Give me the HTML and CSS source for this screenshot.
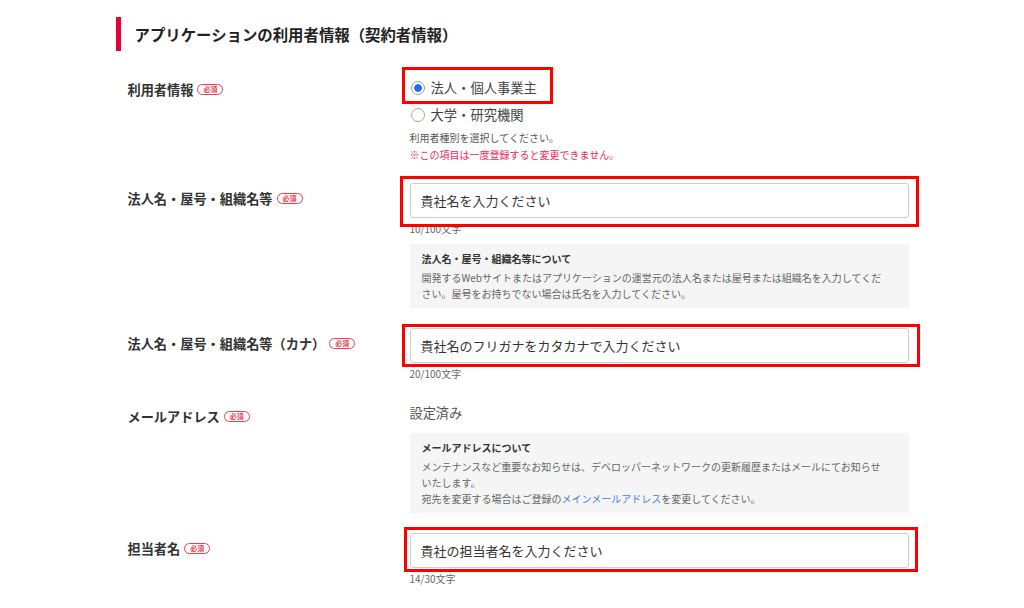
FILE: index.html
```html
<!DOCTYPE html>
<html lang="ja">
  <head>
    <meta charset="utf-8" />
    <title>アプリケーションの利用者情報</title>
    <link rel="stylesheet" href="styles.css">
  </head>
  <body>
    <div class="page">
      <h2 class="heading">アプリケーションの利用者情報（契約者情報）</h2>

      <div class="form">
        <!-- 利用者情報 -->
        <div class="row">
          <div class="label"><span>利用者情報</span><span class="badge">必須</span></div>
          <div class="field">
            <div class="options">
              <label class="option mark mark-radio"><span class="radio checked"></span>法人・個人事業主</label>
              <label class="option"><span class="radio"></span>大学・研究機関</label>
            </div>
            <div class="help">利用者種別を選択してください。</div>
            <div class="note">※この項目は一度登録すると変更できません。</div>
          </div>
        </div>

        <!-- 法人名 -->
        <div class="row">
          <div class="label"><span>法人名・屋号・組織名等</span><span class="badge">必須</span></div>
          <div class="field">
            <div class="mark mark-name"><input class="input" type="text" value="貴社名を入力ください"></div>
            <div class="count">10/100文字</div>
            <div class="info">
              <div class="info-title">法人名・屋号・組織名等について</div>
              <p>開発するWebサイトまたはアプリケーションの運営元の法人名または屋号または組織名を入力してください。屋号をお持ちでない場合は氏名を入力してください。</p>
            </div>
          </div>
        </div>

        <!-- カナ -->
        <div class="row">
          <div class="label"><span>法人名・屋号・組織名等（カナ）</span><span class="badge">必須</span></div>
          <div class="field">
            <div class="mark mark-kana"><input class="input" type="text" value="貴社名のフリガナをカタカナで入力ください"></div>
            <div class="count">20/100文字</div>
          </div>
        </div>

        <!-- メール -->
        <div class="row">
          <div class="label"><span>メールアドレス</span><span class="badge">必須</span></div>
          <div class="field">
            <div class="static">設定済み</div>
            <div class="info">
              <div class="info-title">メールアドレスについて</div>
              <p>メンテナンスなど重要なお知らせは、デベロッパーネットワークの更新履歴またはメールにてお知らせいたします。<br>宛先を変更する場合はご登録の<a href="#">メインメールアドレス</a>を変更してください。</p>
            </div>
          </div>
        </div>

        <!-- 担当者名 -->
        <div class="row">
          <div class="label"><span>担当者名</span><span class="badge">必須</span></div>
          <div class="field">
            <div class="mark mark-person"><input class="input" type="text" value="貴社の担当者名を入力ください"></div>
            <div class="count">14/30文字</div>
          </div>
        </div>
      </div>
    </div>
  </body>
</html>
```

FILE: styles.css
```css
html,
body {
  margin: 0;
  padding: 0;
  overflow: hidden;
  background: #fff;
  color: #333;
  font-family: 'Noto Sans CJK JP', sans-serif;
}
.page {
  width: 793px;
  margin: 0 auto;
}
.heading {
  display: flex;
  align-items: center;
  height: 34px;
  margin: 17px 0 23px 0;
  padding-left: 14px;
  border-left: 5px solid #e8003d;
  font-size: 15.4px;
  font-weight: bold;
  color: #222;
}
.form {
  display: flex;
  flex-direction: column;
  gap: 20px;
}
.row {
  display: grid;
  grid-template-columns: 294px 499px;
}
.label {
  display: flex;
  align-items: center;
  gap: 4px;
  height: 20px;
  padding: 5px 0 0 12px;
  font-size: 13.2px;
  font-weight: bold;
  color: #333;
}
.badge {
  display: inline-block;
  box-sizing: border-box;
  width: 26px;
  height: 11px;
  margin-top: 1px;
  border: 1px solid #f23b4d;
  border-radius: 6px;
  font-size: 7px;
  line-height: 9px;
  text-align: center;
  color: #f23b4d;
}

/* radio */
.options {
  display: flex;
  flex-direction: column;
  align-items: flex-start;
}
.option {
  display: inline-flex;
  align-items: center;
  gap: 6px;
  height: 27px;
  font-size: 13.3px;
  color: #444;
}
.radio {
  box-sizing: border-box;
  width: 14px;
  height: 14px;
  margin-left: 1px;
  border: 1px solid #a5a5a5;
  border-radius: 50%;
  background: #fff;
}
.radio.checked {
  border-color: #9c9c9c;
  background: radial-gradient(circle, #1a6ff0 0 3.5px, #fff 4px);
}
.help {
  font-size: 10px;
  line-height: 19px;
  color: #555;
}
.note {
  font-size: 10px;
  line-height: 16px;
  color: #f0285a;
}

/* inputs */
.input {
  display: block;
  box-sizing: border-box;
  width: 100%;
  height: 35px;
  padding: 0 10px;
  border: 1px solid #ccc;
  border-radius: 3px;
  font-family: 'Noto Sans CJK JP', sans-serif;
  font-size: 13px;
  color: #333;
  outline: none;
}
.count {
  margin-top: 3px;
  font-size: 10px;
  line-height: 15px;
  color: #666;
}
.static {
  font-size: 13.2px;
  line-height: 24px;
  color: #555;
}
.info {
  margin-top: 8px;
  padding: 8px 23px 6px 12px;
  background: #f5f5f5;
  font-size: 10px;
  color: #666;
}
.info-title {
  margin-bottom: 4px;
  line-height: 14px;
  font-weight: bold;
  color: #333;
}
.info p {
  margin: 0;
  line-height: 16px;
}
.info a {
  color: #3d7fe6;
  text-decoration: none;
}

/* red annotation frames */
.mark {
  position: relative;
}
.mark::after {
  content: "";
  position: absolute;
  border: 3px solid #f00;
  pointer-events: none;
}
.mark-radio::after {
  top: -7px;
  bottom: -3px;
  left: -8px;
  right: -16px;
}
.mark-name::after {
  top: -7px;
  bottom: -9px;
  left: -10px;
  right: -10px;
}
.mark-kana::after {
  top: -4px;
  bottom: -4px;
  left: -8px;
  right: -11px;
}
.mark-person::after {
  top: -6px;
  bottom: -4px;
  left: -6px;
  right: -9px;
}
```
